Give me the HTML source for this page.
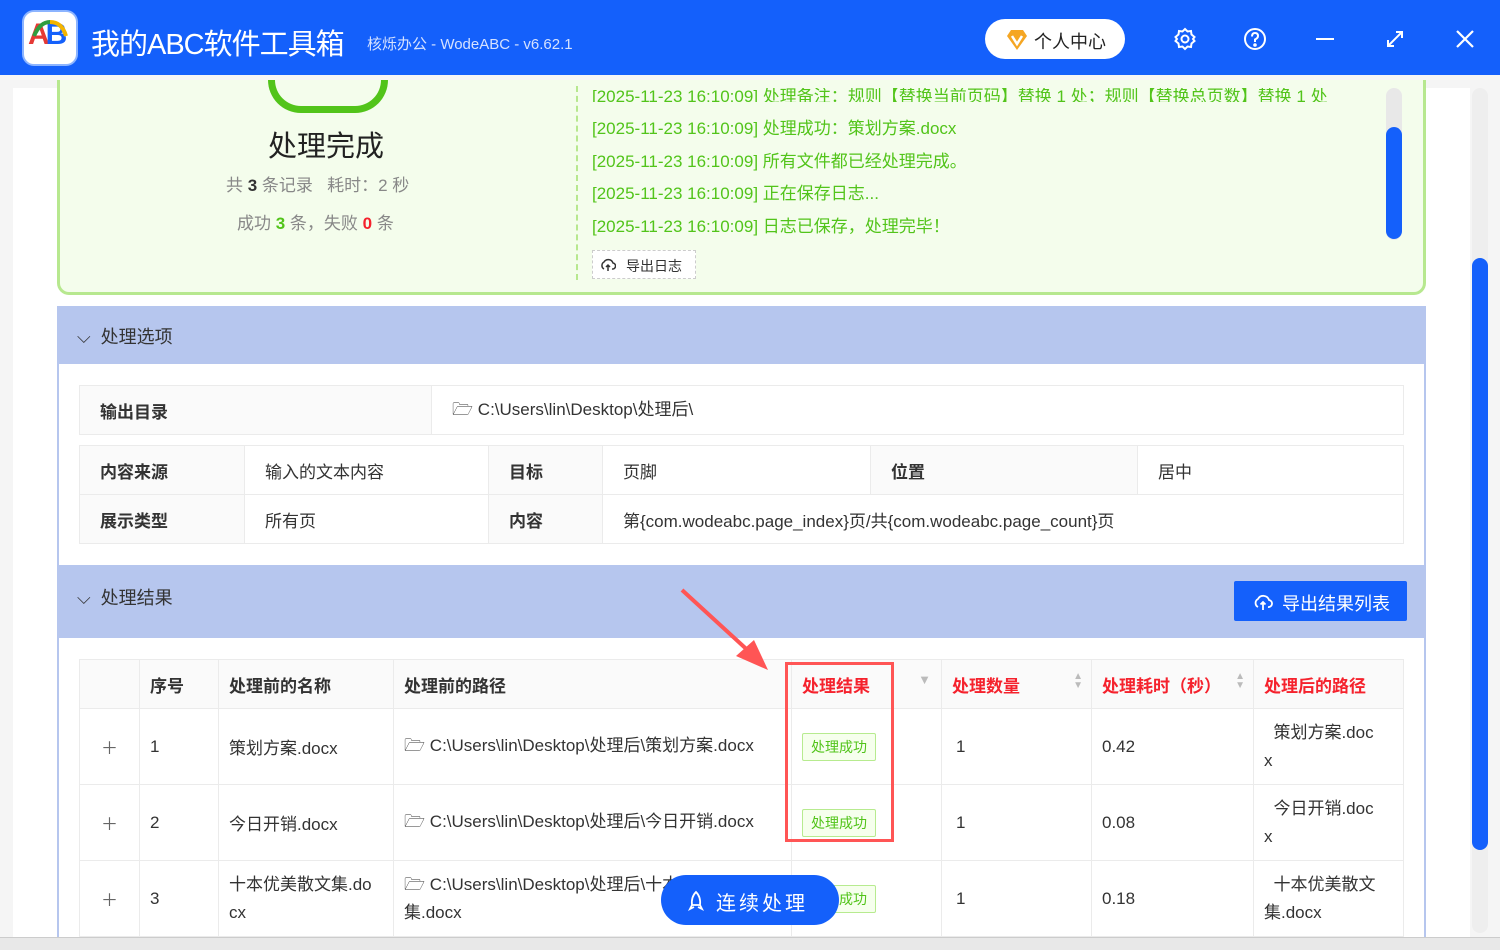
<!DOCTYPE html>
<html><head><meta charset="utf-8"><style>
*{box-sizing:border-box;margin:0;padding:0}
body{width:1500px;height:950px;overflow:hidden;background:#e8e8e8;font-family:"Liberation Sans","Noto Sans CJK SC",sans-serif;position:relative;color:#333}
.abs{position:absolute}
.tb{left:0;top:0;width:1500px;height:75px;background:#1460fb}
.win{left:0;top:75px;width:1500px;height:865px;background:#f5f5f5}
.panel{left:13px;top:88px;width:1457px;height:850px;background:#fff}
.g{color:#52c41a;font-size:17px}
.hdr{left:57px;width:1369px;background:#b6c6ee;font-size:18px;color:#333}
table{border-collapse:collapse;font-size:17px}
td,th{border:1px solid #ebebeb}
.bold{font-weight:bold;background:#fafafa}
.tag{display:inline-block;border:1px solid #b7eb8f;background:#f6ffed;color:#52c41a;font-size:14px;padding:3px 8px;border-radius:2px}
</style></head><body>
<div class="abs tb">
 <div class="abs" style="left:22px;top:10px;width:56px;height:56px;background:#fff;border-radius:12px;border:2px solid #8cb4ff"></div>
 <div class="abs" style="left:28px;top:18px;font-size:30px;font-weight:bold;color:#1460fb;letter-spacing:-4px"><span style="color:#e53935">A</span>B</div>
 <svg class="abs" style="left:30px;top:18px" width="40" height="20"><path d="M4 18 Q10 4 20 4" stroke="#2e9e3e" stroke-width="4" fill="none"/><path d="M20 4 Q32 4 36 18" stroke="#f4b400" stroke-width="4" fill="none"/></svg>
 <div class="abs" style="left:91px;top:21px;font-size:29px;color:#fff;letter-spacing:-1px">我的ABC软件工具箱</div>
 <div class="abs" style="left:367px;top:33px;font-size:15px;color:#d6e2ff">核烁办公 - WodeABC - v6.62.1</div>
 <div class="abs" style="left:985px;top:19px;width:140px;height:40px;background:#fff;border-radius:20px"></div>
 <svg class="abs" style="left:1005px;top:29px" width="24" height="22"><path d="M2 7 L6 1 L18 1 L22 7 L12 21 Z" fill="#f5a623"/><path d="M7 7 L12 15 L17 7" stroke="#fff" stroke-width="2.5" fill="none"/></svg>
 <div class="abs" style="left:1034px;top:28px;font-size:18px;color:#222">个人中心</div>
 <svg class="abs" style="left:1173px;top:27px" width="24" height="24" fill="none" stroke="#fff" stroke-width="2"><circle cx="12" cy="12" r="3.5"/><path d="M12 2 L14.5 4.5 L18 4 L18.5 7.5 L21.5 10 L20 12 L21.5 14 L18.5 16.5 L18 20 L14.5 19.5 L12 22 L9.5 19.5 L6 20 L5.5 16.5 L2.5 14 L4 12 L2.5 10 L5.5 7.5 L6 4 L9.5 4.5 Z"/></svg>
 <svg class="abs" style="left:1243px;top:27px" width="24" height="24" fill="none" stroke="#fff" stroke-width="2"><circle cx="12" cy="12" r="10"/><path d="M9 9.5 Q9 6 12 6 Q15 6 15 9 Q15 11 12 12.5 L12 15"/><circle cx="12" cy="18" r="0.8" fill="#fff"/></svg>
 <div class="abs" style="left:1316px;top:38px;width:18px;height:2px;background:#fff"></div>
 <svg class="abs" style="left:1385px;top:29px" width="20" height="20" stroke="#fff" stroke-width="2" fill="none"><path d="M3 17 L17 3 M11 3 L17 3 L17 9 M3 11 L3 17 L9 17"/></svg>
 <svg class="abs" style="left:1455px;top:29px" width="20" height="20" stroke="#fff" stroke-width="2.2"><path d="M2 2 L18 18 M18 2 L2 18"/></svg>
</div>
<div class="abs win"></div>
<div class="abs panel"></div>
<div class="abs" style="left:1472px;top:88px;width:16px;height:845px;background:#eee;border-radius:8px"></div>
<div class="abs" style="left:1472px;top:258px;width:16px;height:592px;background:#1460fb;border-radius:8px"></div>

<div class="abs" style="left:57px;top:80px;width:1369px;height:215px;background:#f4fdec;border:3px solid #b7e88f;border-top:none;border-radius:0 0 12px 12px"></div>
<div class="abs" style="left:268px;top:80px;width:120px;height:33px;border:7px solid #52c41a;border-top:none;border-radius:0 0 60px 60px"></div>
<div class="abs" style="left:268px;top:123px;font-size:29px;color:#222">处理完成</div>
<div class="abs" style="left:226px;top:171px;font-size:17px;color:#888">共 <b style="color:#333">3</b> 条记录 &nbsp; 耗时：2 秒</div>
<div class="abs" style="left:237px;top:209px;font-size:17px;color:#888">成功 <b style="color:#52c41a">3</b> 条，失败 <b style="color:#f5222d">0</b> 条</div>
<div class="abs" style="left:576px;top:86px;height:194px;border-left:2px dashed #b7e88f"></div>
<div class="abs" style="left:592px;top:88px;width:780px;height:14px;overflow:hidden"><div class="g" style="position:absolute;top:-6px;white-space:nowrap">[2025-11-23 16:10:09] 处理备注：规则【替换当前页码】替换 1 处；规则【替换总页数】替换 1 处</div></div>
<div class="abs g" style="left:592px;top:114px">[2025-11-23 16:10:09] 处理成功：策划方案.docx</div>
<div class="abs g" style="left:592px;top:147px">[2025-11-23 16:10:09] 所有文件都已经处理完成。</div>
<div class="abs g" style="left:592px;top:179px">[2025-11-23 16:10:09] 正在保存日志...</div>
<div class="abs g" style="left:592px;top:212px">[2025-11-23 16:10:09] 日志已保存，处理完毕！</div>
<div class="abs" style="left:592px;top:250px;width:104px;height:29px;border:1px dashed #ccc;background:#fff;font-size:14px;padding:5px 0 0 33px;color:#333">导出日志</div>
<svg class="abs" style="left:600px;top:257px" width="16" height="16" fill="none" stroke="#333" stroke-width="1.5"><path d="M4 12 A4 4 0 0 1 4 5 A5 5 0 0 1 13 6 A3 3 0 0 1 12 12 M8 14 L8 8 M6 10 L8 8 L10 10"/></svg>
<div class="abs" style="left:1386px;top:88px;width:16px;height:152px;background:#e8e8e8;border-radius:8px"></div>
<div class="abs" style="left:1386px;top:127px;width:16px;height:112px;background:#1460fb;border-radius:8px"></div>

<div class="abs hdr" style="top:306px;height:58px;padding:17px 0 0 20px">⌵ &nbsp;处理选项</div>
<div class="abs" style="left:57px;top:364px;width:1369px;height:201px;border-left:2px solid #b6c6ee;border-right:2px solid #b6c6ee"></div>
<table class="abs" style="left:79px;top:385px;width:1325px">
<tr style="height:49px"><td class="bold" style="width:352px;padding-left:20px">输出目录</td><td style="padding-left:20px">🗁 C:\Users\lin\Desktop\处理后\</td></tr></table>
<table class="abs" style="left:79px;top:445px;width:1325px">
<tr style="height:49px"><td class="bold" style="width:165px;padding-left:20px">内容来源</td><td style="width:244px;padding-left:20px">输入的文本内容</td><td class="bold" style="width:114px;padding-left:20px">目标</td><td style="width:268px;padding-left:20px">页脚</td><td class="bold" style="width:267px;padding-left:20px">位置</td><td style="padding-left:20px">居中</td></tr>
<tr style="height:49px"><td class="bold" style="padding-left:20px">展示类型</td><td style="padding-left:20px">所有页</td><td class="bold" style="padding-left:20px">内容</td><td colspan="3" style="padding-left:20px">第{com.wodeabc.page_index}页/共{com.wodeabc.page_count}页</td></tr></table>

<div class="abs hdr" style="top:565px;height:73px;padding:19px 0 0 20px">⌵ &nbsp;处理结果</div>
<div class="abs" style="left:1234px;top:581px;width:173px;height:40px;background:#1460fb;color:#fff;font-size:18px;padding:9px 0 0 48px;border-radius:2px">导出结果列表</div>
<svg class="abs" style="left:1253px;top:593px" width="20" height="18" fill="none" stroke="#fff" stroke-width="1.8"><path d="M5 14 A4.5 4.5 0 0 1 5 6 A6 6 0 0 1 16 7 A3.5 3.5 0 0 1 15 14 M10 17 L10 9 M7.5 11.5 L10 9 L12.5 11.5"/></svg>
<div class="abs" style="left:57px;top:638px;width:1369px;height:302px;border-left:2px solid #b6c6ee;border-right:2px solid #b6c6ee"></div>
<table class="abs" style="left:79px;top:659px;width:1325px">
<tr style="height:49px;background:#fafafa;font-weight:bold;text-align:left"><th style="width:60px"></th><th style="width:79px;text-align:left;padding-left:10px">序号</th><th style="width:175px;text-align:left;padding-left:10px">处理前的名称</th><th style="width:398px;text-align:left;padding-left:10px">处理前的路径</th><th style="width:150px;text-align:left;padding-left:10px;color:#f5222d">处理结果 <span style="color:#bbb;float:right;margin-right:10px;font-size:13px">▼</span></th><th style="width:150px;text-align:left;padding-left:10px;color:#f5222d">处理数量<span style="color:#bbb;float:right;margin-right:8px;font-size:10px;line-height:9px">▲<br>▼</span></th><th style="width:162px;text-align:left;padding-left:10px;color:#f5222d">处理耗时（秒）<span style="color:#bbb;float:right;margin-right:8px;font-size:10px;line-height:9px">▲<br>▼</span></th><th style="text-align:left;padding-left:10px;color:#f5222d">处理后的路径</th></tr>
<tr style="height:76px"><td style="text-align:center;color:#666">＋</td><td style="padding-left:10px">1</td><td style="padding-left:10px">策划方案.docx</td><td style="padding-left:10px">🗁 C:\Users\lin\Desktop\处理后\策划方案.docx</td><td style="padding-left:10px"><span class="tag">处理成功</span></td><td style="padding-left:14px">1</td><td style="padding-left:10px">0.42</td><td style="padding-left:10px;line-height:28px">&nbsp;&nbsp;策划方案.doc<br>x</td></tr>
<tr style="height:76px"><td style="text-align:center;color:#666">＋</td><td style="padding-left:10px">2</td><td style="padding-left:10px">今日开销.docx</td><td style="padding-left:10px">🗁 C:\Users\lin\Desktop\处理后\今日开销.docx</td><td style="padding-left:10px"><span class="tag">处理成功</span></td><td style="padding-left:14px">1</td><td style="padding-left:10px">0.08</td><td style="padding-left:10px;line-height:28px">&nbsp;&nbsp;今日开销.doc<br>x</td></tr>
<tr style="height:76px"><td style="text-align:center;color:#666">＋</td><td style="padding-left:10px">3</td><td style="padding-left:10px;line-height:28px">十本优美散文集.do<br>cx</td><td style="padding-left:10px;line-height:28px">🗁 C:\Users\lin\Desktop\处理后\十本<br>集.docx</td><td style="padding-left:10px"><span class="tag">处理成功</span></td><td style="padding-left:14px">1</td><td style="padding-left:10px">0.18</td><td style="padding-left:10px;line-height:28px">&nbsp;&nbsp;十本优美散文<br>集.docx</td></tr>
</table>
<div class="abs" style="left:0;top:937px;width:1500px;height:13px;background:#e8e8e8;border-top:1px solid #ccc"></div>
<div class="abs" style="left:785px;top:662px;width:109px;height:180px;border:3px solid #f55"></div>
<svg class="abs" style="left:670px;top:580px" width="110" height="100"><path d="M12 10 L84 76" stroke="#f55" stroke-width="4"/><path d="M98 90 L66 76 L84 60 Z" fill="#f55"/></svg>
<div class="abs" style="left:661px;top:875px;width:178px;height:50px;background:#1460fb;border-radius:25px;color:#fff;font-size:20px;letter-spacing:3px;padding:12px 0 0 55px">连续处理</div>
<svg class="abs" style="left:687px;top:890px" width="18" height="22" fill="none" stroke="#fff" stroke-width="1.8"><path d="M9 2 Q14 7 13 15 L5 15 Q4 7 9 2 Z M5 15 L3 19 L7 17 M13 15 L15 19 L11 17"/></svg>
</body></html>
